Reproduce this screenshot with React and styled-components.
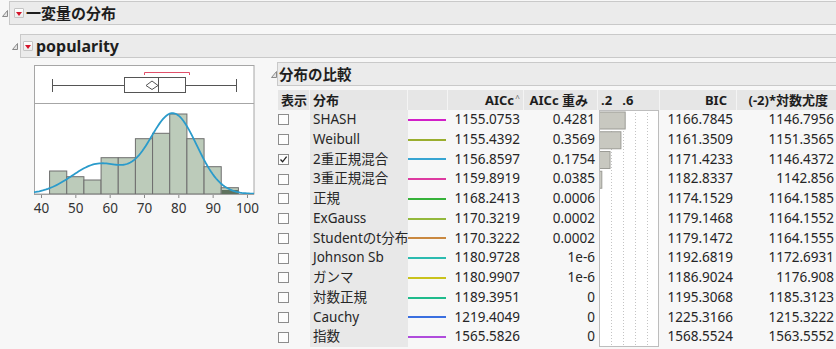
import React from 'react'
import styled, { createGlobalStyle } from 'styled-components'

const GlobalStyle = createGlobalStyle`
  html, body {
    margin: 0;
    padding: 0;
    background: #f7f7f7;
    overflow: hidden;
  }
  body {
    font-family: "Noto Sans", "Noto Sans CJK JP", sans-serif;
    color: #1e1e1e;
  }
`

const Page = styled.div`
  width: 836px;
  padding-top: 1px;
`

const OutlineRow = styled.div`
  display: flex;
  align-items: center;
  margin-left: ${p => p.$indent}px;
  margin-top: ${p => p.$top}px;
`

const Disclosure = styled.svg`
  width: 6px;
  height: 7px;
  flex: none;
  margin-right: ${p => p.$gap}px;
`

const OutlineBar = styled.div`
  flex: 1;
  height: 24px;
  box-sizing: border-box;
  border: 1px solid #c9c9c9;
  border-right: none;
  margin-right: -20px;
  background: #ebebeb;
  display: flex;
  align-items: center;
`

const MenuButton = styled.span`
  width: 10px;
  height: 10px;
  box-sizing: border-box;
  margin-left: ${p => p.$left}px;
  border: 1px solid #c4c4c4;
  border-radius: 1px;
  background: linear-gradient(#ffffff, #ececec);
  display: flex;
  align-items: center;
  justify-content: center;
  &::after {
    content: '';
    border-left: 3px solid transparent;
    border-right: 3px solid transparent;
    border-top: 4px solid #d4142a;
    margin-top: 1px;
  }
`

const Title = styled.span`
  font-weight: bold;
  font-size: ${p => p.$size}px;
  margin-left: ${p => p.$left}px;
  line-height: 1;
  white-space: nowrap;
`

const Body = styled.div`
  display: flex;
  align-items: flex-start;
  margin-left: 20px;
  margin-top: 4px;
`

const PlotColumn = styled.div`
  margin-left: 13px;
  margin-top: 2px;
  flex: none;
`

const ReportColumn = styled.div`
  margin-left: 11px;
  flex: 1;
  min-width: 0;
`

const Table = styled.div`
  display: grid;
  grid-template-columns: 32px 98px 40px 76px 74px 62px 77px 101px;
  grid-template-rows: 20px repeat(12, 19.75px);
  margin-left: 8px;
  margin-top: 4px;
  font-size: 13.5px;
`

const HeadCell = styled.div`
  background: #e6e6e6;
  border-right: 1px solid #f4f4f4;
  font-weight: bold;
  font-size: 13px;
  display: flex;
  align-items: center;
  justify-content: ${p => (p.$right ? 'flex-end' : 'flex-start')};
  padding: ${p => (p.$right ? '0 2px 0 0' : '0 0 0 3px')};
  white-space: nowrap;
  overflow: hidden;
  line-height: 1;
`

const SortMark = styled.span`
  display: inline-block;
  width: 7px;
  font-size: 8px;
  font-weight: normal;
  color: #666;
  text-align: center;
  margin-top: -4px;
`

const Cell = styled.div`
  display: flex;
  align-items: center;
  justify-content: ${p => (p.$right ? 'flex-end' : 'flex-start')};
  padding: ${p => (p.$right ? `0 ${p.$pad || 4}px 0 0` : '0 0 0 3px')};
  background: ${p => (p.$shade ? '#e8e8e8' : 'transparent')};
  color: #262626;
  white-space: nowrap;
  overflow: hidden;
  line-height: 1;
`

const CheckCell = styled.div`
  display: flex;
  align-items: center;
`

const Check = styled.span`
  width: 11px;
  height: 11px;
  box-sizing: border-box;
  border: 1px solid #8c8c8c;
  background: #fdfdfd;
  display: flex;
  align-items: center;
  justify-content: center;
`

const Swatch = styled.div`
  display: flex;
  align-items: center;
  &::after {
    content: '';
    width: 38px;
    height: 2px;
    background: ${p => p.$color};
  }
`

const WeightPanel = styled.svg`
  grid-column: 6;
  grid-row: 2 / span 12;
  margin-left: 1px;
  width: 60px;
  height: 237px;
  background: #fff;
  box-sizing: border-box;
`

const rows = [
  ['SHASH', '1155.0753', '0.4281', 0.4281, '1166.7845', '1146.7956', '#d21fc8'],
  ['Weibull', '1155.4392', '0.3569', 0.3569, '1161.3509', '1151.3565', '#9aae2e'],
  ['2重正規混合', '1156.8597', '0.1754', 0.1754, '1171.4233', '1146.4372', '#37a5d2', true],
  ['3重正規混合', '1159.8919', '0.0385', 0.0385, '1182.8337', '1142.856', '#dd3aa0'],
  ['正規', '1168.2413', '0.0006', 0.0006, '1174.1529', '1164.1585', '#36b23a'],
  ['ExGauss', '1170.3219', '0.0002', 0.0002, '1179.1468', '1164.1552', '#93b83c'],
  ['Studentのt分布', '1170.3222', '0.0002', 0.0002, '1179.1472', '1164.1555', '#c98840'],
  ['Johnson Sb', '1180.9728', '1e-6', 0, '1192.6819', '1172.6931', '#2bbbb0'],
  ['ガンマ', '1180.9907', '1e-6', 0, '1186.9024', '1176.908', '#c9c21c'],
  ['対数正規', '1189.3951', '0', 0, '1195.3068', '1185.3123', '#1fbb8c'],
  ['Cauchy', '1219.4049', '0', 0, '1225.3166', '1215.3222', '#3a6fe0'],
  ['指数', '1565.5826', '0', 0, '1568.5524', '1563.5552', '#b04cdc'],
]

function Tri({ gap }) {
  return (
    <Disclosure $gap={gap} viewBox="0 0 6 7">
      <polygon points="5.5,0.5 5.5,6.5 0.5,6.5" fill="#e4e4e4" stroke="#8a8a8a" strokeWidth="1" />
    </Disclosure>
  )
}

// 横軸 40..100
const xv = v => 41 + (v - 40) * 3.433
const barTops = [171, 176.7, 180, 157.7, 157.7, 138.7, 133.3, 114, 138.7, 166.7, 187.7]

function density(v) {
  const a = 30 * Math.exp(-((v - 57) ** 2) / (2 * 8 * 8))
  const b = 80 * Math.exp(-((v - 78.5) ** 2) / (2 * 6.9 * 6.9))
  return a + b
}

function Histogram() {
  const pts = []
  for (let v = 37; v <= 103; v += 0.5) {
    pts.push(`${xv(v).toFixed(2)},${(194 - density(v)).toFixed(2)}`)
  }
  const ticks = [40, 50, 60, 70, 80, 90, 100]
  return (
    <svg width="226" height="154" viewBox="33 64 226 154" style={{ display: 'block' }}>
      <defs>
        <clipPath id="plotclip">
          <rect x="34" y="104" width="220" height="90" />
        </clipPath>
      </defs>
      <rect x="34.5" y="65.5" width="219.5" height="128.5" fill="#fff" stroke="#a6a6a6" />
      <line x1="34" y1="103.5" x2="254" y2="103.5" stroke="#a6a6a6" />
      {/* 箱ひげ図 */}
      <line x1="52" y1="85.5" x2="124" y2="85.5" stroke="#555" />
      <line x1="185" y1="85.5" x2="236" y2="85.5" stroke="#555" />
      <line x1="52.5" y1="79" x2="52.5" y2="92" stroke="#555" />
      <line x1="236.5" y1="79" x2="236.5" y2="92" stroke="#555" />
      <rect x="124.5" y="77.5" width="61" height="15" fill="#fff" stroke="#555" />
      <line x1="158.5" y1="77.5" x2="158.5" y2="92.5" stroke="#555" />
      <polygon points="146,85.5 152,81 158,85.5 152,89.5" fill="#fff" stroke="#555" />
      <polyline points="144.5,75 144.5,72.5 189.5,72.5 189.5,75" fill="none" stroke="#e0506a" />
      {/* ヒストグラム */}
      {barTops.map((t, i) => {
        const x = xv(42.5 + i * 5)
        return (
          <rect key={i} x={x} y={t} width={17.17} height={194 - t} fill="#bccbba" stroke="#6e6e6e" strokeWidth="1" />
        )
      })}
      <rect x={xv(92.5) + 0.5} y="190" width="16.2" height="4" fill="#5f725e" />
      <polyline points={pts.join(' ')} fill="none" stroke="#2a9bcb" strokeWidth="1.8" clipPath="url(#plotclip)" />
      <line x1="34" y1="194.5" x2="254" y2="194.5" stroke="#a0a0a0" />
      {ticks.map(t => (
        <g key={t}>
          <line x1={xv(t) + 0.5} y1="195" x2={xv(t) + 0.5} y2="198" stroke="#888" />
          <text x={xv(t) + 0.5} y="212.5" textAnchor="middle" fontSize="13.5" fill="#333" fontFamily="Noto Sans, sans-serif">
            {t}
          </text>
        </g>
      ))}
    </svg>
  )
}

function Weights() {
  const rh = 19.75
  return (
    <WeightPanel viewBox="0 0 60 237">
      {[12, 24, 36, 48].map(x => (
        <line key={x} x1={x + 0.5} y1="0" x2={x + 0.5} y2="237" stroke="#c4c4c4" strokeDasharray="1 2" />
      ))}
      {rows.map((r, i) =>
        r[3] * 60 >= 1 ? (
          <rect key={i} x="0.5" y={i * rh + 2} width={r[3] * 60} height="17" fill="#c8c8c0" stroke="#9c9c96" />
        ) : null
      )}
      <rect x="0.5" y="0.5" width="59" height="236" fill="none" stroke="#bdbdbd" />
    </WeightPanel>
  )
}

export default function App() {
  return (
    <Page>
      <GlobalStyle />
      <OutlineRow $indent={2} $top={0}>
        <Tri gap={1} />
        <OutlineBar>
          <MenuButton $left={4} />
          <Title $size={15} $left={2}>一変量の分布</Title>
        </OutlineBar>
      </OutlineRow>
      <OutlineRow $indent={12} $top={9}>
        <Tri gap={2} />
        <OutlineBar>
          <MenuButton $left={2} />
          <Title $size={16} $left={3}>popularity</Title>
        </OutlineBar>
      </OutlineRow>
      <Body>
        <PlotColumn>
          <Histogram />
        </PlotColumn>
        <ReportColumn>
          <OutlineRow $indent={1} $top={0}>
            <Tri gap={0} />
            <OutlineBar>
              <Title $size={14.5} $left={1}>分布の比較</Title>
            </OutlineBar>
          </OutlineRow>
          <Table>
            <Weights />
            <HeadCell>表示</HeadCell>
            <HeadCell>分布</HeadCell>
            <HeadCell />
            <HeadCell $right>
              AICc<SortMark>^</SortMark>
            </HeadCell>
            <HeadCell $right>
              AICc 重み<SortMark />
            </HeadCell>
            <HeadCell>.2&nbsp;&nbsp;&nbsp;.6</HeadCell>
            <HeadCell $right>
              BIC<SortMark />
            </HeadCell>
            <HeadCell $right>
              (-2)*対数尤度<SortMark />
            </HeadCell>
            {rows.map(r => (
              <React.Fragment key={r[0]}>
                <CheckCell>
                  <Check>
                    {r[7] && (
                      <svg width="9" height="9" viewBox="0 0 9 9">
                        <path d="M1.5 4.5 L3.6 6.8 L7.6 1.6" fill="none" stroke="#222" strokeWidth="1.3" />
                      </svg>
                    )}
                  </Check>
                </CheckCell>
                <Cell $shade>{r[0]}</Cell>
                <Swatch $color={r[6]} />
                <Cell $right>{r[1]}</Cell>
                <Cell $right $pad={3}>{r[2]}</Cell>
                <Cell $right>{r[4]}</Cell>
                <Cell $right>{r[5]}</Cell>
              </React.Fragment>
            ))}
          </Table>
        </ReportColumn>
      </Body>
    </Page>
  )
}
